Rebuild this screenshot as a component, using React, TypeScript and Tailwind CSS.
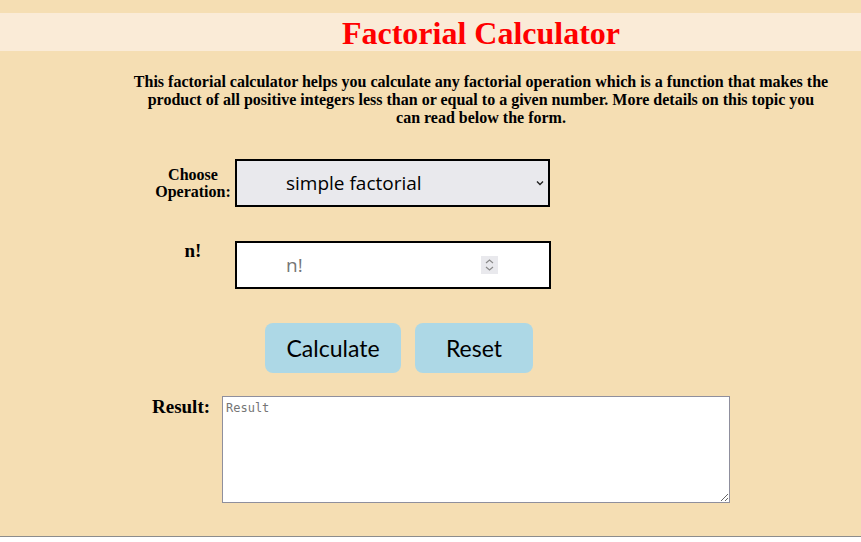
import React from 'react';

const serif = { fontFamily: '"Liberation Serif", "Times New Roman", serif' };

export default function App() {
  return (
    <div className="bg-white w-full h-[542px]">
      <div className="bg-[#f5deb3] h-[537px] border-b border-[#8c8c8c] flex flex-col pt-[13px]" style={serif}>
        <div className="bg-[#faebd7] h-[38px] flex justify-center pl-[101px]">
          <h1 className="text-[32px] leading-[40px] font-bold text-[#ff0000]">Factorial Calculator</h1>
        </div>

        <div className="pl-[101px] flex flex-col">
          <p className="mt-[22px] px-[28px] text-center text-[16px] leading-[18px] font-bold text-black">
            This factorial calculator helps you calculate any factorial operation which is a function that makes the product of all positive integers less than or equal to a given number. More details on this topic you
            <br />
            can read below the form.
          </p>
        </div>

        <div className="flex flex-col mt-[32px]">
          <div className="flex items-center pl-[155px]">
            <label className="w-[76px] text-center text-[16px] leading-[17px] font-bold">Choose Operation:</label>
            <div className="relative ml-[4px]">
              <select
                className="appearance-none w-[315px] h-[48px] border-2 border-black bg-[#e9e9ed] pl-[49px] text-[19px] text-black outline-none"
                style={{ fontFamily: '"Open Sans", "Noto Sans", sans-serif' }}
                defaultValue="simple"
              >
                <option value="simple">simple factorial</option>
                <option value="double">double factorial</option>
              </select>
              <svg className="absolute right-[5px] top-[20px] pointer-events-none" width="10" height="8" viewBox="0 0 10 8">
                <path d="M2 2.5 L5 5.5 L8 2.5" fill="none" stroke="#222" strokeWidth="1.4" />
              </svg>
            </div>
          </div>

          <div className="flex items-start pl-[155px] mt-[34px]">
            <label className="w-[76px] text-center text-[19px] leading-[20px] font-bold">n!</label>
            <div className="ml-[4px] w-[316px] h-[48px] border-2 border-black bg-white flex items-center">
              <input
                type="text"
                placeholder="n!"
                className="w-[190px] ml-[49px] bg-transparent text-[19px] outline-none placeholder:text-[#757575]"
                style={{ fontFamily: '"Open Sans", "Noto Sans", sans-serif' }}
              />
              <svg className="ml-[5px]" width="17" height="18" viewBox="0 0 17 18">
                <rect width="17" height="18" fill="#e9e9ed" />
                <path d="M5 7 L8.5 4 L12 7" fill="none" stroke="#8a8a8a" strokeWidth="1.2" />
                <path d="M5 11 L8.5 14 L12 11" fill="none" stroke="#8a8a8a" strokeWidth="1.2" />
              </svg>
            </div>
          </div>

          <div className="flex gap-[14px] pl-[265px] mt-[34px]" style={{ fontFamily: '"Lato", "Open Sans", sans-serif' }}>
            <button className="w-[136px] h-[50px] rounded-[8px] bg-[#add8e6] text-[23px] text-black">Calculate</button>
            <button className="w-[118px] h-[50px] rounded-[8px] bg-[#add8e6] text-[23px] text-black">Reset</button>
          </div>

          <div className="flex items-start pl-[152px] mt-[23px]">
            <label className="w-[70px] text-[19px] leading-[20px] font-bold pt-[1px]">Result:</label>
            <textarea
              placeholder="Result"
              className="w-[508px] h-[107px] border border-[#8f8f9d] bg-white px-[3px] py-[2px] text-[12px] outline-none placeholder:text-[#757575]"
              style={{ fontFamily: '"DejaVu Sans Mono", "Liberation Mono", monospace' }}
            />
          </div>
        </div>
      </div>
    </div>
  );
}
